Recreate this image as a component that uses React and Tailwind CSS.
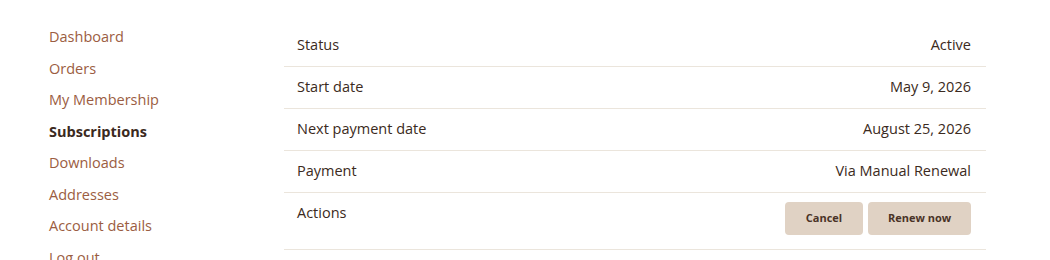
import React from 'react';

const navItems = [
  { label: 'Dashboard' },
  { label: 'Orders' },
  { label: 'My Membership' },
  { label: 'Subscriptions', active: true },
  { label: 'Downloads' },
  { label: 'Addresses' },
  { label: 'Account details' },
  { label: 'Log out' },
];

const rows = [
  { label: 'Status', value: 'Active' },
  { label: 'Start date', value: 'May 9, 2026' },
  { label: 'Next payment date', value: 'August 25, 2026' },
  { label: 'Payment', value: 'Via Manual Renewal' },
];

const App = () => {
  return (
    <div
      className="flex h-[260px] w-full overflow-hidden bg-white pl-[49px] pt-[21px]"
      style={{ fontFamily: '"Open Sans", Lato, sans-serif' }}
    >
      {/* Account navigation */}
      <nav className="w-[235px] shrink-0">
        <ul>
          {navItems.map((item) => (
            <li key={item.label}>
              <a
                href="#"
                className={
                  item.active
                    ? 'block text-[14.5px] leading-[31.5px] font-bold text-[#3b2a21]'
                    : 'block text-[14.5px] leading-[31.5px] font-medium text-[#9b5d42]'
                }
              >
                {item.label}
              </a>
            </li>
          ))}
        </ul>
      </nav>

      {/* Subscription details */}
      <div className="w-[702px] pt-[4px]">
        <table className="w-full border-collapse text-[14.5px] font-medium text-[#3b2a21]">
          <tbody>
            {rows.map((row) => (
              <tr key={row.label} className="border-b border-[#ebe5dc]">
                <td className="pt-[9px] pb-[11px] pl-[13px] leading-[21px]">{row.label}</td>
                <td className="pt-[9px] pb-[11px] pr-[15px] text-right leading-[21px]">{row.value}</td>
              </tr>
            ))}
            <tr className="border-b border-[#ebe5dc]">
              <td className="pt-[9px] pl-[13px] align-top leading-[21px]">Actions</td>
              <td className="pt-[9px] pb-[14px] pr-[15px]">
                <div className="flex justify-end gap-[5px]">
                  <button className="h-[33px] w-[78px] rounded-[4px] bg-[#e0d2c4] text-[11px] font-bold text-[#4a3327]">
                    Cancel
                  </button>
                  <button className="h-[33px] w-[103px] rounded-[4px] bg-[#e0d2c4] text-[11px] font-bold text-[#4a3327]">
                    Renew now
                  </button>
                </div>
              </td>
            </tr>
          </tbody>
        </table>
      </div>
    </div>
  );
};

export default App;
